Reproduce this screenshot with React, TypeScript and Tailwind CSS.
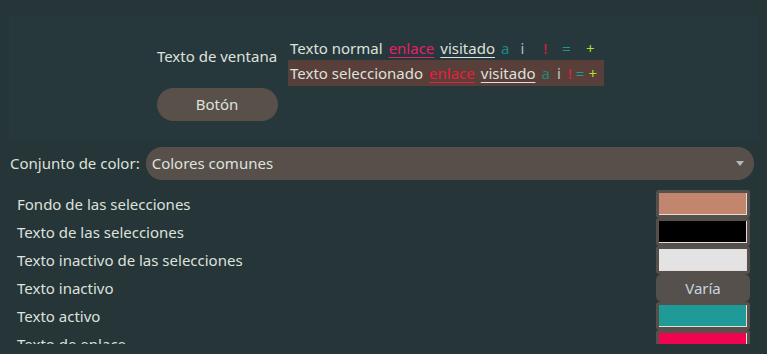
interface ColorRow {
  label: string
  color?: string
}

const ROWS: ColorRow[] = [
  { label: 'Fondo de las selecciones', color: '#c2866f' },
  { label: 'Texto de las selecciones', color: '#000000' },
  { label: 'Texto inactivo de las selecciones', color: '#e3e3e3' },
  { label: 'Texto inactivo' },
  { label: 'Texto activo', color: '#1f9a97' },
  { label: 'Texto de enlace', color: '#f0044f' },
]

const Swatch = ({ row }: { row: ColorRow }) => {
  if (!row.color) {
    return (
      <div className="w-[94px] h-[28px] rounded-md bg-[#55504b] flex items-center justify-center text-[#c8d4e0]">
        Varía
      </div>
    )
  }
  return (
    <div className="w-[94px] h-[28px] rounded-[3px] bg-[#55504b] p-[3px]">
      <div className="w-full h-full border-r border-b border-[#e8dcd8]" style={{ background: row.color }} />
    </div>
  )
}

export default function App() {
  return (
    <div
      className="w-[767px] h-[354px] overflow-hidden bg-[#253538] text-[#dfe1dd] text-[15px]"
      style={{ fontFamily: '"Noto Sans", "Open Sans", sans-serif' }}
    >
      {/* preview */}
      <div className="pt-[16px] px-[9px]">
        <div className="bg-[#27383c] h-[124px] flex items-start justify-center pt-[20px] gap-[10px] pr-[7px]">
          <div className="flex flex-col items-center w-[122px] pt-[10px]">
            <div className="leading-[20px] whitespace-nowrap">Texto de ventana</div>
            <button className="mt-[22px] w-[121px] h-[33px] rounded-full bg-[#585049] text-[#dfe1dd]">Botón</button>
          </div>
          <div className="flex flex-col">
            <div className="h-[24px] flex items-center px-[2px] gap-[6px] whitespace-nowrap">
              <span>Texto normal</span>
              <span className="text-[#e91e63] underline underline-offset-3">enlace</span>
              <span className="underline underline-offset-3">visitado</span>
              <span className="text-[#1d8a85]">a</span>
              <span className="text-[#aabccc] ml-[5px]">i</span>
              <span className="text-[#e9163c] ml-[13px]">!</span>
              <span className="text-[#1d9a95] ml-[9px]">=</span>
              <span className="text-[#a6e22e] ml-[9px]">+</span>
            </div>
            <div className="h-[26px] w-[316px] bg-[#583f3a] flex items-center px-[2px] gap-[6px] whitespace-nowrap">
              <span>Texto seleccionado</span>
              <span className="text-[#e91e3c] underline underline-offset-3">enlace</span>
              <span className="underline underline-offset-3">visitado</span>
              <span className="text-[#1d8a75]">a</span>
              <span className="text-[#c8c8c8] ml-[1px]">i</span>
              <span className="text-[#e91e3c] ml-[1px]">!</span>
              <span className="text-[#1d9a95] -ml-[2px]">=</span>
              <span className="text-[#a6e22e] -ml-[2px]">+</span>
            </div>
          </div>
        </div>
      </div>

      {/* color set */}
      <div className="flex items-center mt-[7px] pl-[10px] pr-[13px] gap-[6px]">
        <span className="whitespace-nowrap">Conjunto de color:</span>
        <div className="flex-1 h-[33px] rounded-[16px] bg-[#574f4a] flex items-center justify-between pl-[6px] pr-[10px]">
          <span>Colores comunes</span>
          <svg width="8" height="6" viewBox="0 0 8 6">
            <path d="M0 0 L8 0 L4 5 Z" fill="#b8b8b8" />
          </svg>
        </div>
      </div>

      {/* color list */}
      <div className="mt-[10px] ml-[13px] mr-[17px] h-[154px] overflow-hidden flex flex-col">
        {ROWS.map((row) => (
          <div key={row.label} className="h-[28px] shrink-0 flex items-center justify-between pl-[4px]">
            <span>{row.label}</span>
            <Swatch row={row} />
          </div>
        ))}
      </div>
    </div>
  )
}
